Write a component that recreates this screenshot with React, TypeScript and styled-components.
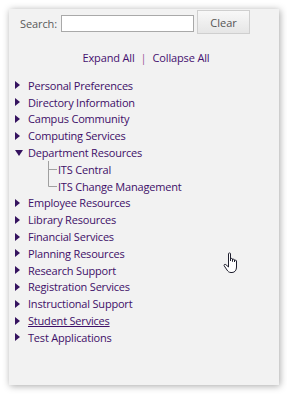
import React from "react";
import styled, { createGlobalStyle } from "styled-components";

const Global = createGlobalStyle`
  html, body { margin: 0; padding: 0; background: #ffffff; }
  body { font-family: "Open Sans", "Noto Sans", sans-serif; }
`;

const Page = styled.div`
  width: 287px;
  height: 394px;
  padding: 9px 8px 9px 9px;
  box-sizing: border-box;
  position: relative;
`;

const Panel = styled.div`
  width: 270px;
  height: 376px;
  background: #f2f2f2;
  box-shadow: 1px 1px 7px rgba(0, 0, 0, 0.35);
  box-sizing: border-box;
  padding: 1px 0 0 6px;
  display: flex;
  flex-direction: column;
`;

const SearchRow = styled.div`
  display: flex;
  align-items: flex-start;
  height: 24px;
`;

const Label = styled.span`
  font-size: 11px;
  line-height: 17px;
  margin-top: 5px;
  letter-spacing: -0.1px;
  color: #5a5a5a;
  margin-left: 5px;
  margin-right: 4px;
`;

const Input = styled.div`
  width: 131px;
  height: 15px;
  border: 1px solid #a9a9a9;
  background: #fff;
  margin-top: 5px;
`;

const Button = styled.div`
  width: 51px;
  height: 22px;
  margin-left: 3px;
  border: 1px solid #cfcfcf;
  background: linear-gradient(#f8f8f8, #e6e6e6);
  display: flex;
  align-items: center;
  justify-content: center;
  font-size: 11px;
  color: #555;
`;

const Links = styled.div`
  display: flex;
  justify-content: center;
  gap: 6px;
  margin-top: 15px;
  padding-right: 2px;
  font-size: 11px;
  letter-spacing: -0.15px;
  color: #45106f;
  height: 16px;
  align-items: center;
`;

const Sep = styled.span`
  color: #a0559a;
`;

const Tree = styled.ul`
  list-style: none;
  margin: 12px 0 0 0;
  padding: 0;
`;

const Item = styled.li`
  display: flex;
  align-items: center;
  height: 16.8px;
  font-size: 11px;
  letter-spacing: -0.2px;
  color: #3e0f68;
`;

const Arrow = styled.span`
  width: 12px;
  display: flex;
  justify-content: flex-start;
  padding-left: 0px;
`;

const Text = styled.span<{ $u?: boolean }>`
  text-decoration: ${(p) => (p.$u ? "underline" : "none")};
  white-space: nowrap;
  margin-left: 1px;
`;

const Child = styled.li`
  display: flex;
  align-items: center;
  height: 16.8px;
  font-size: 11px;
  letter-spacing: -0.2px;
  color: #3e0f68;
  padding-left: 32px;
`;

const Lines = styled.svg`
  width: 10px;
  height: 17px;
  flex: none;
`;

const Cursor = styled.svg`
  position: absolute;
  left: 222px;
  top: 252px;
`;

const Right = () => (
  <svg width="5" height="8" viewBox="0 0 5 8">
    <polygon points="0,0 5,4 0,8" fill="#35135f" />
  </svg>
);
const Down = () => (
  <svg width="8" height="6" viewBox="0 0 8 6">
    <polygon points="0,0 8,0 4,6" fill="#35135f" />
  </svg>
);

const before = [
  "Personal Preferences",
  "Directory Information",
  "Campus Community",
  "Computing Services",
];
const after = [
  "Employee Resources",
  "Library Resources",
  "Financial Services",
  "Planning Resources",
  "Research Support",
  "Registration Services",
  "Instructional Support",
  "Student Services",
  "Test Applications",
];

export default function App() {
  return (
    <Page>
      <Global />
      <Panel>
        <SearchRow>
          <Label>Search:</Label>
          <Input />
          <Button>Clear</Button>
        </SearchRow>
        <Links>
          <span>Expand All</span>
          <Sep>|</Sep>
          <span>Collapse All</span>
        </Links>
        <Tree>
          {before.map((t) => (
            <Item key={t}>
              <Arrow>
                <Right />
              </Arrow>
              <Text>{t}</Text>
            </Item>
          ))}
          <Item>
            <Arrow>
              <Down />
            </Arrow>
            <Text>Department Resources</Text>
          </Item>
          <Child>
            <Lines viewBox="0 0 10 17">
              <line x1="1.5" y1="0" x2="1.5" y2="17" stroke="#a0a0a0" strokeWidth="1" />
              <line x1="1.5" y1="8.5" x2="10" y2="8.5" stroke="#a0a0a0" strokeWidth="1" />
            </Lines>
            <Text>ITS Central</Text>
          </Child>
          <Child>
            <Lines viewBox="0 0 10 17">
              <line x1="1.5" y1="0" x2="1.5" y2="8.5" stroke="#a0a0a0" strokeWidth="1" />
              <line x1="1.5" y1="8.5" x2="10" y2="8.5" stroke="#a0a0a0" strokeWidth="1" />
            </Lines>
            <Text>ITS Change Management</Text>
          </Child>
          {after.map((t) => (
            <Item key={t}>
              <Arrow>
                <Right />
              </Arrow>
              <Text $u={t === "Student Services"}>{t}</Text>
            </Item>
          ))}
        </Tree>
      </Panel>
      <Cursor width="20" height="22" viewBox="0 0 20 22">
        <path
          d="M6.5 1.5 C6.5 0.8 8.5 0.8 8.5 1.5 L8.5 9 L8.5 7 C8.5 6.2 10.5 6.2 10.5 7 L10.5 9.5 L10.5 7.8 C10.5 7 12.5 7 12.5 7.8 L12.5 10 L12.5 8.8 C12.5 8 14.5 8 14.5 8.8 L14.5 15 C14.5 18 13 20.5 10 20.5 L9 20.5 C7 20.5 6 19.5 5 18 L2.2 13.8 C1.6 12.8 2.8 11.8 3.8 12.6 L6.5 15 Z"
          fill="#fff"
          stroke="#1f1f2e"
          strokeWidth="1"
          strokeLinejoin="round"
        />
      </Cursor>
    </Page>
  );
}
